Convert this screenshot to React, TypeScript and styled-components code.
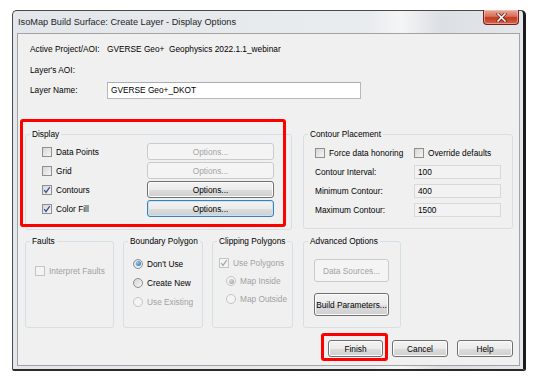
import React, { FC } from 'react';
import styled, { createGlobalStyle, css } from 'styled-components';

const GlobalStyle = createGlobalStyle`
    html, body {
        margin: 0;
        padding: 0;
        background: #ffffff;
    }
    body {
        font-family: "Liberation Sans", Arial, sans-serif;
        font-size: 8.3px;
        color: #000000;
        text-align: left;
    }
`

const Window = styled.div`
    box-sizing: border-box;
    width: 514px;
    height: 361px;
    margin: 10px 0 0 12px;
    border: 1px solid #4a4a4a;
    border-right: 3px solid #1c1c1c;
    border-bottom: 2px solid #2a2a2a;
    border-radius: 5px 5px 2px 2px;
    background: linear-gradient(90deg, #e3e6ea 0%, #e9ecef 70%, #f4f5f6 76%, #dcdfe3 84%, #e3e6ea 100%);
    padding: 0 3px 3px 4px;
    display: flex;
    flex-direction: column;
`

const TitleBar = styled.div`
    height: 22px;
    display: flex;
    align-items: flex-start;
`

const Title = styled.div`
    font-family: "Liberation Sans", Arial, sans-serif;
    font-size: 9.2px;
    color: #1e1e1e;
    padding: 6px 0 0 1px;
`

const CloseButton = styled.div`
    box-sizing: border-box;
    width: 36px;
    height: 15px;
    margin: -1px 1px 0 auto;
    border: 1px solid #6e2418;
    border-top: none;
    border-radius: 0 0 4px 4px;
    background: linear-gradient(#e9a999 0%, #d8705a 45%, #c2391f 55%, #d5654a 100%);
    box-shadow: inset 0 0 0 1px rgba(255, 210, 200, 0.5);
    display: flex;
    align-items: center;
    justify-content: center;
`

const Client = styled.div`
    flex: 1;
    box-sizing: border-box;
    background: #f0f0f0;
    border: 1px solid #a3a3a3;
    padding: 4px 6px 0 7px;
    display: flex;
    flex-direction: column;
`

const Header = styled.div`
    margin-left: 5px;
    display: grid;
    grid-template-columns: 77px 254px;
    grid-template-rows: 22px 20px 20px;
    align-items: center;
`

const InfoText = styled.div`
    white-space: pre;
`

const NameInput = styled.div`
    box-sizing: border-box;
    height: 17px;
    border: 1px solid #b5b8bf;
    border-top-color: #abadb3;
    background: #ffffff;
    padding-left: 3px;
    display: flex;
    align-items: center;
`

const GroupRow = styled.div<{ $top: number }>`
    display: flex;
    align-items: flex-start;
    margin-top: ${p => p.$top}px;
`

const Group = styled.div<{ $width: number; $height: number; $pad: string; $gap?: number }>`
    position: relative;
    box-sizing: border-box;
    width: ${p => p.$width}px;
    height: ${p => p.$height}px;
    margin-right: ${p => p.$gap ?? 0}px;
    border: 1px solid #d5dfe5;
    border-radius: 3px;
    padding: ${p => p.$pad};
`

const Caption = styled.span`
    position: absolute;
    top: -6px;
    left: 4px;
    padding: 0 2px;
    line-height: 11px;
    background: #f0f0f0;
    white-space: nowrap;
`

const Highlighted = styled.div`
    position: relative;
`

const RedBox = styled.div<{ $l: number; $t: number; $w: number; $h: number }>`
    position: absolute;
    left: ${p => p.$l}px;
    top: ${p => p.$t}px;
    width: ${p => p.$w}px;
    height: ${p => p.$h}px;
    box-sizing: border-box;
    border: 3px solid #ff0000;
    border-radius: 3px;
    pointer-events: none;
`

const DisplayGrid = styled.div`
    display: grid;
    grid-template-columns: 105px 127px;
    grid-auto-rows: 19px;
    align-items: center;
`

const ContourGrid = styled.div`
    display: grid;
    grid-template-columns: 99px 87px;
    grid-auto-rows: 19px;
    align-items: center;
`

const Stack = styled.div<{ $gap?: number }>`
    display: flex;
    flex-direction: column;
    gap: ${p => p.$gap ?? 0}px;
`

const OptionLine = styled.div<{ $h?: number; $indent?: number; $disabled?: boolean }>`
    height: ${p => p.$h ?? 19}px;
    display: flex;
    align-items: center;
    gap: 4px;
    padding-left: ${p => p.$indent ?? 0}px;
    color: ${p => (p.$disabled ? '#a2a2a2' : '#000000')};
    white-space: nowrap;
`

const ValueBox = styled.div`
    box-sizing: border-box;
    height: 14px;
    border: 1px solid #d9d9d9;
    background: #f2f2f2;
    padding-left: 3px;
    display: flex;
    align-items: center;
`

const Box = styled.span<{ $disabled?: boolean }>`
    box-sizing: border-box;
    width: 10px;
    height: 10px;
    flex: none;
    border: 1px solid ${p => (p.$disabled ? '#c4c4c4' : '#8e8f8f')};
    background: ${p => (p.$disabled ? '#f4f4f4' : 'linear-gradient(135deg, #d6d6d6, #f6f6f6)')};
    display: flex;
    align-items: center;
    justify-content: center;
`

const Round = styled(Box)`
    border-radius: 50%;
`

const Dot = styled.span<{ $disabled?: boolean }>`
    width: 5px;
    height: 5px;
    border-radius: 50%;
    background: ${p =>
        p.$disabled
            ? 'radial-gradient(circle at 35% 35%, #d8d8d8, #9a9a9a)'
            : 'radial-gradient(circle at 35% 35%, #8fd0ff, #1a5fae)'};
`

type BtnKind = 'normal' | 'disabled' | 'focus';

const Button = styled.div<{ $kind?: BtnKind; $w?: number; $h?: number }>`
    box-sizing: border-box;
    width: ${p => (p.$w ? `${p.$w}px` : '100%')};
    height: ${p => p.$h ?? 17}px;
    border-radius: 3px;
    display: flex;
    align-items: center;
    justify-content: center;
    white-space: nowrap;
    ${p =>
        p.$kind === 'disabled'
            ? css`
                  border: 1px solid #c9ccce;
                  background: #f4f4f4;
                  color: #a4a4a4;
              `
            : css`
                  border: 1px solid ${p.$kind === 'focus' ? '#3c7fb1' : '#707070'};
                  background: linear-gradient(#f3f3f3 0%, #ebebeb 50%, #dddddd 51%, #cfcfcf 100%);
                  box-shadow: inset 0 0 0 1px ${p.$kind === 'focus' ? '#c4e5f6' : '#fcfcfc'};
                  color: #000000;
              `}
`

const Footer = styled.div`
    margin-top: 12px;
    display: flex;
    justify-content: flex-end;
    gap: 9px;
`

const Check: FC<{ checked?: boolean; disabled?: boolean }> = ({ checked, disabled }) => (
    <Box $disabled={disabled}>
        {checked && (
            <svg width="8" height="8" viewBox="0 0 8 8">
                <path d="M1.2 4.2 L3 6.4 L6.8 1.2" fill="none" stroke={disabled ? '#a8a8a8' : '#3a4f9c'} strokeWidth="1.3" />
            </svg>
        )}
    </Box>
)

const Radio: FC<{ selected?: boolean; disabled?: boolean }> = ({ selected, disabled }) => (
    <Round $disabled={disabled}>{selected && <Dot $disabled={disabled} />}</Round>
)

const displayRows = [
    { label: 'Data Points', checked: false, kind: 'disabled' as BtnKind },
    { label: 'Grid', checked: false, kind: 'disabled' as BtnKind },
    { label: 'Contours', checked: true, kind: 'normal' as BtnKind },
    { label: 'Color Fill', checked: true, kind: 'focus' as BtnKind },
];

const contourRows = [
    { label: 'Contour Interval:', value: '100' },
    { label: 'Minimum Contour:', value: '400' },
    { label: 'Maximum Contour:', value: '1500' },
];

const App: FC = () => {
    return (
        <>
            <GlobalStyle />
            <Window>
                <TitleBar>
                    <Title>IsoMap Build Surface: Create Layer - Display Options</Title>
                    <CloseButton>
                        <svg width="11" height="9" viewBox="0 0 11 9">
                            <path d="M2 1 L9 8 M9 1 L2 8" stroke="#5a1a10" strokeWidth="3" strokeLinecap="square" />
                            <path d="M2 1 L9 8 M9 1 L2 8" stroke="#ffffff" strokeWidth="1.6" strokeLinecap="square" />
                        </svg>
                    </CloseButton>
                </TitleBar>
                <Client>
                    <Header>
                        <InfoText>Active Project/AOI:</InfoText>
                        <InfoText>GVERSE Geo+  Geophysics 2022.1.1_webinar</InfoText>
                        <InfoText>Layer's AOI:</InfoText>
                        <InfoText />
                        <InfoText>Layer Name:</InfoText>
                        <NameInput>GVERSE Geo+_DKOT</NameInput>
                    </Header>

                    <GroupRow $top={34}>
                        <Highlighted>
                            <Group $width={267} $height={96} $pad="7px 0 0 16px" $gap={11}>
                                <Caption>Display</Caption>
                                <DisplayGrid>
                                    {displayRows.map(r => (
                                        <React.Fragment key={r.label}>
                                            <OptionLine>
                                                <Check checked={r.checked} />
                                                {r.label}
                                            </OptionLine>
                                            <Button $kind={r.kind}>Options...</Button>
                                        </React.Fragment>
                                    ))}
                                </DisplayGrid>
                            </Group>
                            <RedBox $l={-5} $t={-15} $w={266} $h={108} />
                        </Highlighted>
                        <Group $width={210} $height={95} $pad="8px 0 0 11px">
                            <Caption>Contour Placement</Caption>
                            <ContourGrid>
                                <OptionLine>
                                    <Check />
                                    Force data honoring
                                </OptionLine>
                                <OptionLine>
                                    <Check />
                                    Override defaults
                                </OptionLine>
                                {contourRows.map(r => (
                                    <React.Fragment key={r.label}>
                                        <InfoText>{r.label}</InfoText>
                                        <ValueBox>{r.value}</ValueBox>
                                    </React.Fragment>
                                ))}
                            </ContourGrid>
                        </Group>
                    </GroupRow>

                    <GroupRow $top={11}>
                        <Group $width={89} $height={87} $pad="19px 0 0 9px" $gap={9}>
                            <Caption>Faults</Caption>
                            <OptionLine $disabled>
                                <Check disabled />
                                Interpret Faults
                            </OptionLine>
                        </Group>
                        <Group $width={80} $height={87} $pad="12px 0 0 9px" $gap={9}>
                            <Caption>Boundary Polygon</Caption>
                            <OptionLine>
                                <Radio selected />
                                Don't Use
                            </OptionLine>
                            <OptionLine>
                                <Radio />
                                Create New
                            </OptionLine>
                            <OptionLine $disabled>
                                <Radio disabled />
                                Use Existing
                            </OptionLine>
                        </Group>
                        <Group $width={81} $height={87} $pad="11px 0 0 6px" $gap={10}>
                            <Caption>Clipping Polygons</Caption>
                            <OptionLine $disabled>
                                <Check checked disabled />
                                Use Polygons
                            </OptionLine>
                            <OptionLine $disabled $indent={7} $h={18}>
                                <Radio selected disabled />
                                Map Inside
                            </OptionLine>
                            <OptionLine $disabled $indent={7} $h={18}>
                                <Radio disabled />
                                Map Outside
                            </OptionLine>
                        </Group>
                        <Group $width={98} $height={87} $pad="17px 0 0 10px">
                            <Caption>Advanced Options</Caption>
                            <Stack $gap={11}>
                                <Button $kind="disabled" $w={75} $h={23}>Data Sources...</Button>
                                <Button $w={75} $h={23}>Build Parameters...</Button>
                            </Stack>
                        </Group>
                    </GroupRow>

                    <Footer>
                        <Highlighted>
                            <Button $w={55}>Finish</Button>
                            <RedBox $l={-7} $t={-7} $w={67} $h={28} />
                        </Highlighted>
                        <Button $w={56}>Cancel</Button>
                        <Button $w={56}>Help</Button>
                    </Footer>
                </Client>
            </Window>
        </>
    );
}

export default App;
